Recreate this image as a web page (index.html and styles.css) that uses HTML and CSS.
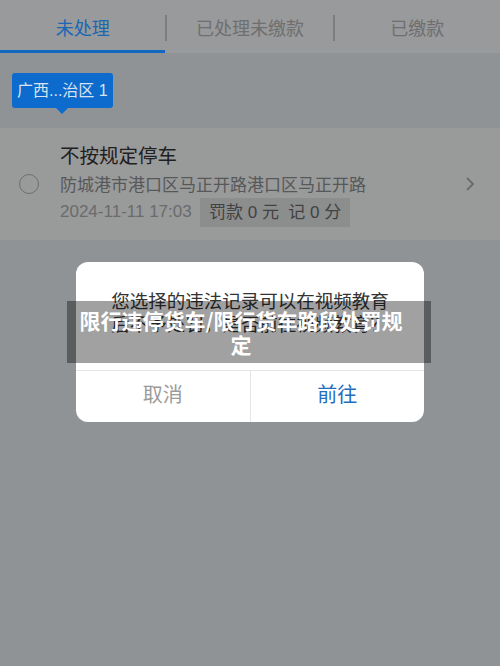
FILE: index.html
```html
<!DOCTYPE html>
<html lang="zh">
<head>
<meta charset="utf-8">
<link rel="stylesheet" href="styles.css">
</head>
<body>
<div class="page">
  <div class="tabs">
    <div class="tab active">未处理</div>
    <div class="sep"></div>
    <div class="tab">已处理未缴款</div>
    <div class="sep"></div>
    <div class="tab">已缴款</div>
  </div>
  <div class="filter">
    <div class="badge">广西...治区 1</div>
  </div>
  <div class="item">
    <div class="radio"></div>
    <div class="info">
      <div class="title">不按规定停车</div>
      <div class="addr">防城港市港口区马正开路港口区马正开路</div>
      <div class="meta">
        <span class="date">2024-11-11 17:03</span>
        <span class="tag">罚款 0 元&nbsp;&nbsp;记 0 分</span>
      </div>
    </div>
    <svg class="chev" width="12" height="18" viewBox="0 0 12 18"><path d="M3 3l6 6-6 6" fill="none" stroke="#6c6d6e" stroke-width="2"/></svg>
  </div>
</div>
<div class="dialog">
  <div class="msg">您选择的违法记录可以在视频教育<br>后不予处罚，是否前往视频教育？</div>
  <div class="btns">
    <div class="btn cancel">取消</div>
    <div class="btn ok">前往</div>
  </div>
</div>
<div class="banner">限行违停货车/限行货车路段处罚规定</div>
</body>
</html>
```
FILE: styles.css
```css
html, body { margin: 0; padding: 0; }
body {
  width: 500px; height: 666px; overflow: hidden;
  background: #8f9396;
  font-family: "Noto Sans CJK SC", "Noto Sans", sans-serif;
  position: relative;
}
.tabs {
  height: 53px; background: #999a9b;
  display: flex; align-items: center;
  position: relative;
}
.tab {
  flex: 1; text-align: center; font-size: 18px; color: #6e6f70;
  height: 53px; line-height: 55px; box-sizing: border-box;
}
.tab.active { color: #1a67b4; border-bottom: 3px solid #1268bf; }
.sep { width: 2px; height: 26px; background: #7c7d7e; margin-top: 2px; }
.filter { height: 75px; padding: 20px 0 0 12px; box-sizing: border-box; }
.badge {
  display: inline-block; position: relative;
  background: #0c6bcc; color: #d9e3ee;
  font-size: 16px; height: 35px; line-height: 35px;
  padding: 0 5px 0 5px; border-radius: 3px;
  font-family: "Liberation Sans", "Noto Sans CJK SC", sans-serif;
}
.badge::after {
  content: ""; position: absolute; left: 44px; bottom: -6px;
  border-left: 6px solid transparent; border-right: 6px solid transparent;
  border-top: 6px solid #0c6bcc;
}
.item {
  background: #999a9a; height: 112px;
  display: flex; align-items: center;
  padding: 0 0 0 19px; box-sizing: border-box;
}
.radio {
  width: 18px; height: 18px; border: 1.6px solid #6d6e6f; border-radius: 50%;
  margin-right: 21px; flex: none;
}
.info { flex: 1; padding-top: 0; }
.title { font-size: 19.5px; color: #1f2021; line-height: 26px; }
.addr { font-size: 17px; color: #575859; line-height: 26px; margin-top: 3px; }
.meta { display: flex; align-items: center; margin-top: 1px; }
.date { font-size: 17px; color: #6a6b6c; width: 140px; font-family: "Liberation Sans", sans-serif; }
.tag {
  background: #8c8d8d; color: #414243; font-size: 17px;
  height: 29px; line-height: 29px; padding: 0 9px 0 9px;
  font-family: "Liberation Sans", "Noto Sans CJK SC", sans-serif;
}
.chev { margin-right: 24px; flex: none; }
.dialog {
  position: absolute; left: 76px; top: 262px; width: 348px; height: 160px;
  background: #fff; border-radius: 12px; overflow: hidden;
  display: flex; flex-direction: column;
}
.msg {
  flex: 1; text-align: center; font-size: 18.5px; color: #333;
  line-height: 23px; padding-top: 27px; box-sizing: border-box;
}
.btns { height: 51px; display: flex; border-top: 1px solid #e6e6e6; }
.btn { flex: 1; text-align: center; line-height: 46px; font-size: 20px; }
.cancel { color: #9a9a9a; border-right: 1px solid #e6e6e6; }
.ok { color: #1f6cc0; }
.banner {
  position: absolute; left: 67px; top: 301px; width: 364px; height: 62px;
  background: rgba(0,0,0,0.37); color: #fff; font-weight: bold;
  font-size: 21px; line-height: 24px; text-align: center;
  padding: 7px 26px 0 10px; box-sizing: border-box;
}
```
